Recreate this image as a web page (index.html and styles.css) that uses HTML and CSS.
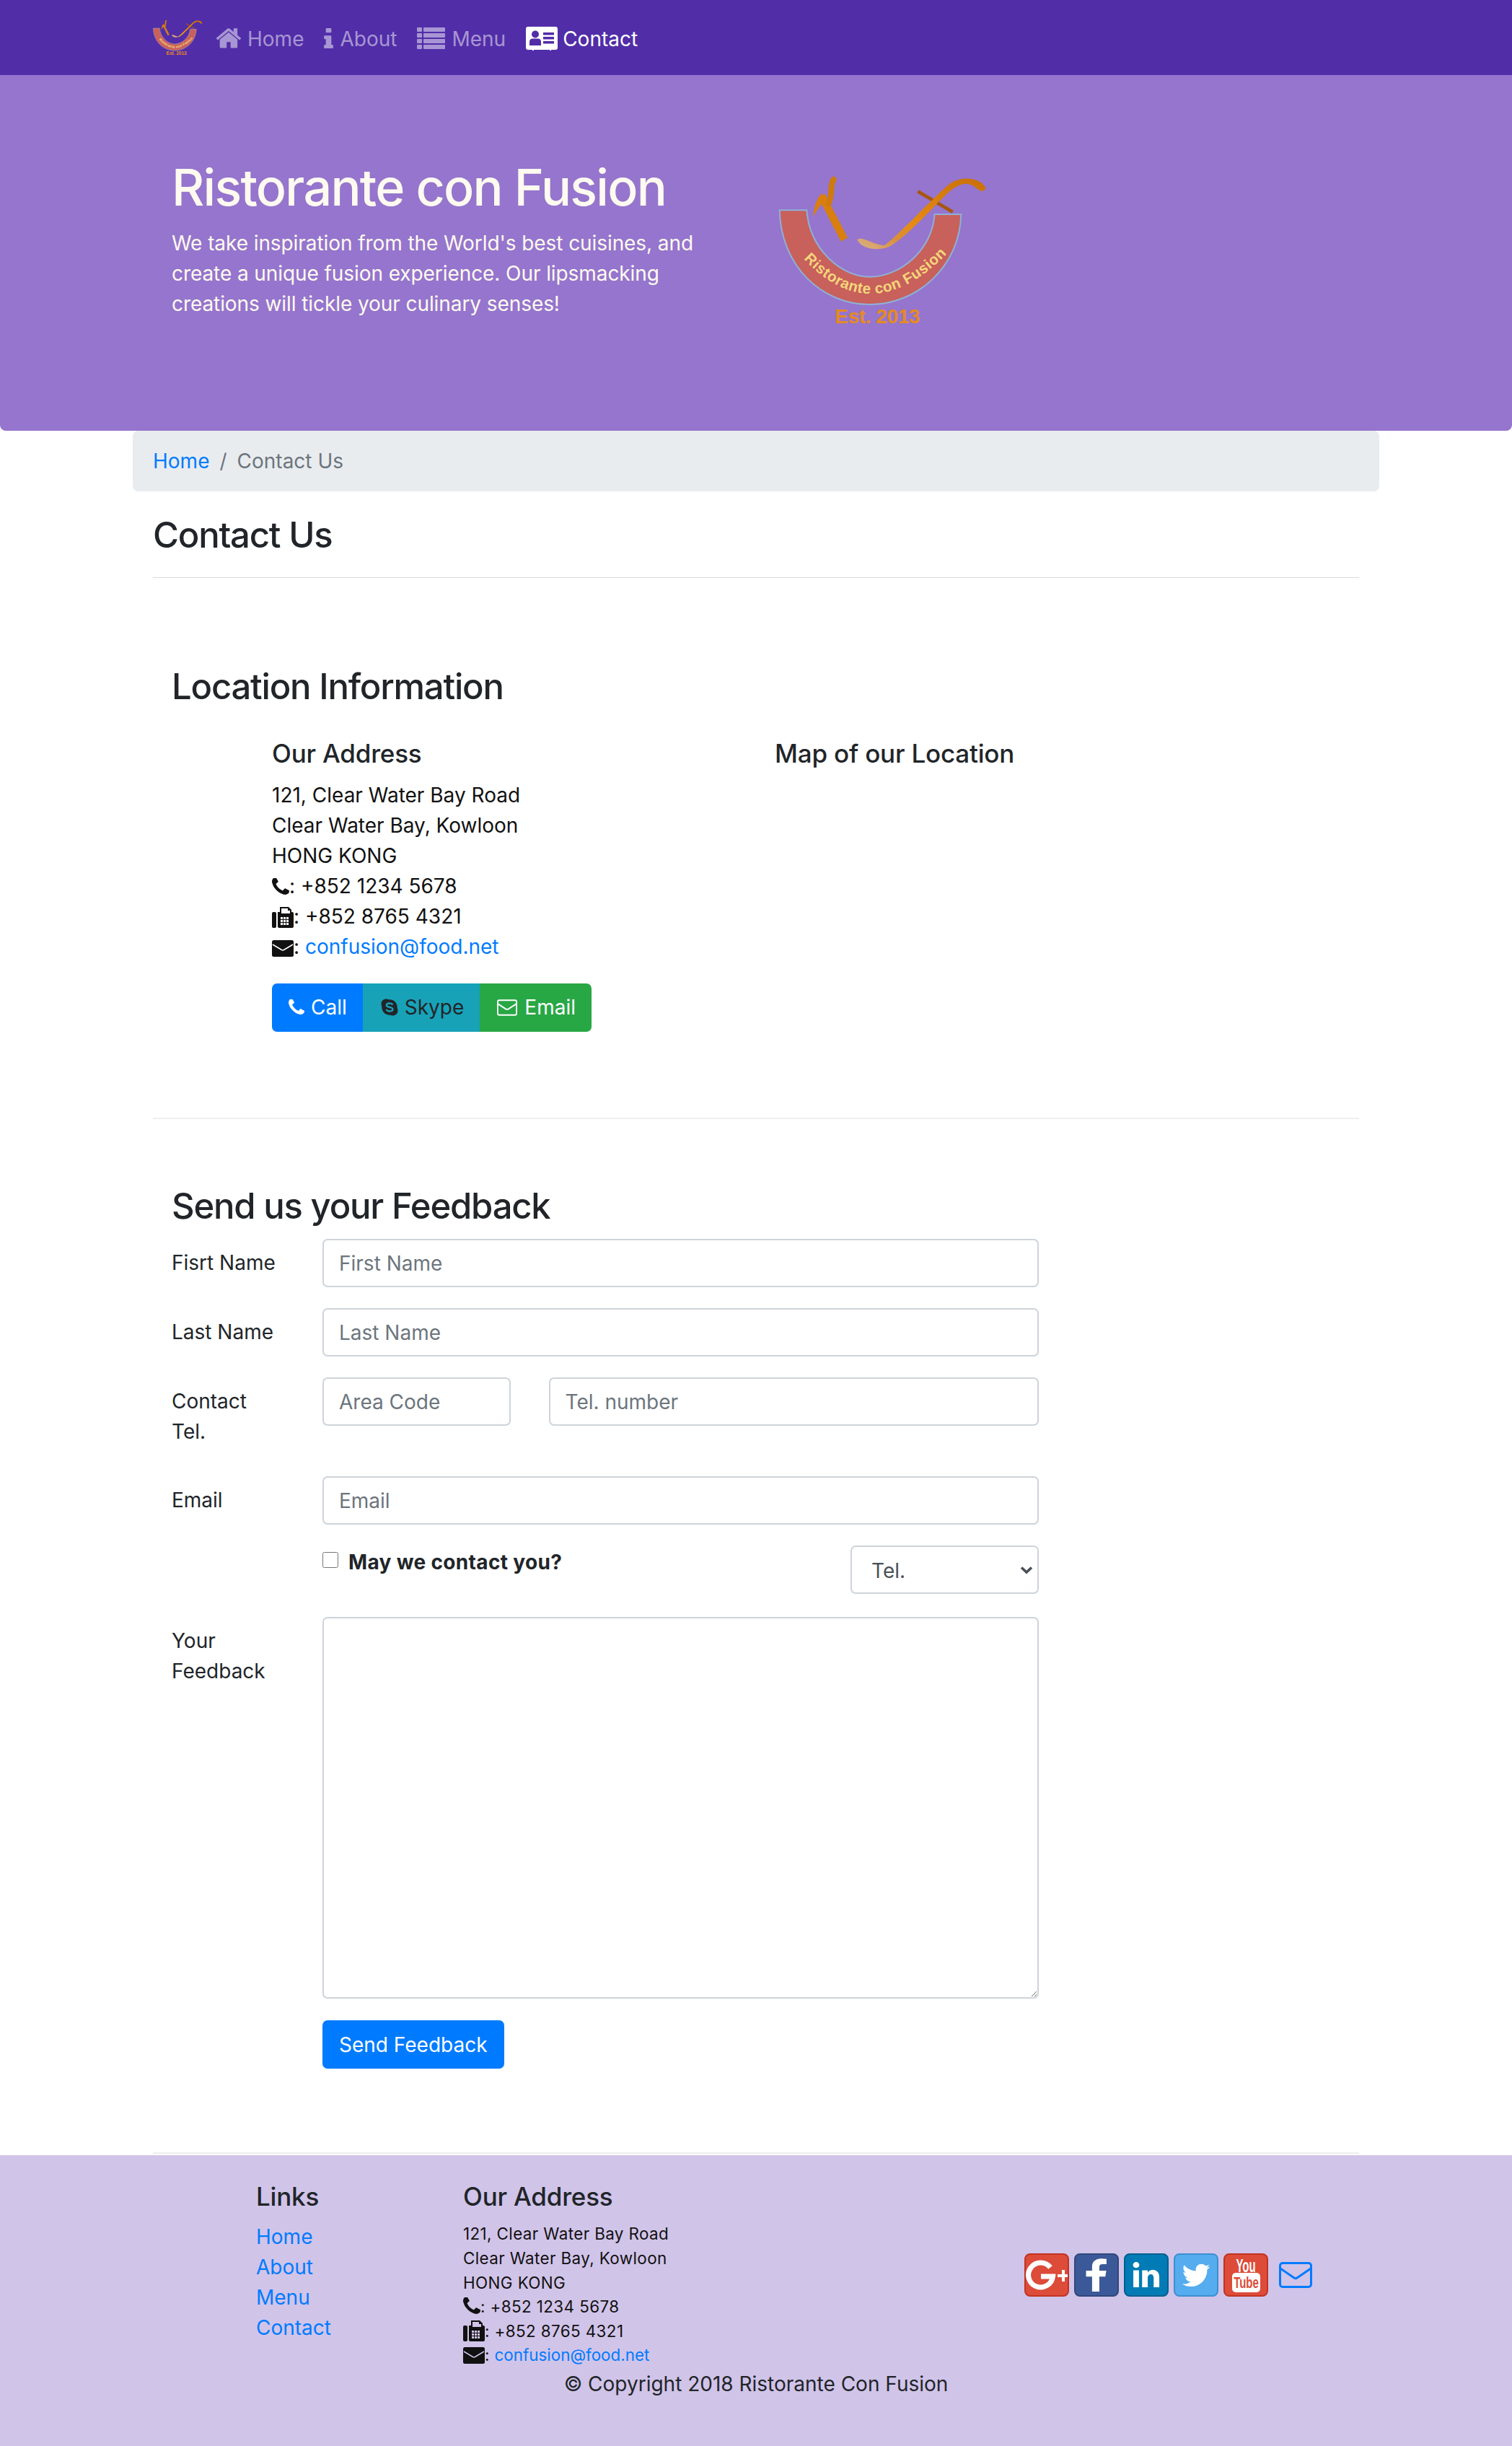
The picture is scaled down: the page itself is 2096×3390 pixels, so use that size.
FILE: index.html
```html
<!DOCTYPE html>
<html lang="en">
<head>
<meta charset="utf-8">
<title>Ristorante con Fusion: Contact</title>
<link rel="stylesheet" href="styles.css">
</head>
<body>
<svg class="defs" width="0" height="0" aria-hidden="true">
  <defs>
    <linearGradient id="spoon" x1="0" y1="1" x2="1" y2="0">
      <stop offset="0" stop-color="#d9b48c"/><stop offset="0.22" stop-color="#d98f3a"/><stop offset="0.4" stop-color="#e58a12"/><stop offset="1" stop-color="#c96f08"/>
    </linearGradient>
    <symbol id="logo" viewBox="120 90 870 636">
      <path d="M125 238H238C250 400 380 515 500 515C630 515 760 400 770 255H880C875 470 700 630 500 630C300 630 130 470 125 238Z" fill="#c8605c" stroke="#8fb0d6" stroke-width="6"/>
      <path d="M265 265C268 225 280 185 302 168L318 196C298 210 280 240 265 265Z" fill="#d97f10"/>
      <path d="M300 178L394 360" fill="none" stroke="#d97f10" stroke-width="32"/>
      <path d="M328 212C348 170 332 135 350 110" fill="none" stroke="#cf7a0e" stroke-width="24" stroke-linecap="round"/>
      <path d="M700 160L845 245" stroke="#a8570f" stroke-width="14"/>
      <path d="M448 360C470 345 500 375 560 385C620 340 750 200 830 130C880 95 950 100 980 140C985 160 965 165 945 148C910 115 870 125 820 170C740 250 660 340 590 385C540 412 465 400 448 360Z" fill="url(#spoon)"/>
      <path id="logo-arc" d="M225 440Q500 735 810 430" fill="none"/>
      <text class="logo-arc-text"><textPath href="#logo-arc" startOffset="0" textLength="690">Ristorante con Fusion</textPath></text>
      <text class="logo-est" x="355" y="708" textLength="355">Est. 2013</text>
    </symbol>
  </defs>
</svg>

<nav class="navbar">
  <div class="nav-inner">
    <svg class="nav-logo"><use href="#logo"/></svg>
    <a class="nav-link" href="#"><svg class="ic-home" viewBox="100 200 1600 1400"><path fill="currentColor" d="M1472 992v480q0 26-19 45t-45 19h-384v-384h-256v384h-384q-26 0-45-19t-19-45v-480q0-1 .5-3t.5-3l575-474 575 474q1 2 1 6zm223-69l-62 74q-8 9-21 11h-3q-13 0-21-7l-692-577-692 577q-12 8-24 7-13-2-21-11l-62-74q-8-10-7-23.5t11-21.5l719-599q32-26 76-26t76 26l244 204v-195q0-14 9-23t23-9h192q14 0 23 9t9 23v408l219 182q10 8 11 21.5t-7 23.5z"/></svg>Home</a>
    <a class="nav-link" href="#"><svg class="ic-info" viewBox="570 128 650 1408"><path fill="currentColor" d="M1216 1344v128q0 26-19 45t-45 19h-512q-26 0-45-19t-19-45v-128q0-26 19-45t45-19h64v-384h-64q-26 0-45-19t-19-45v-128q0-26 19-45t45-19h384q26 0 45 19t19 45v576h64q26 0 45 19t19 45zm-128-1152v192q0 26-19 45t-45 19h-256q-26 0-45-19t-19-45v-192q0-26 19-45t45-19h256q26 0 45 19t19 45z"/></svg>About</a>
    <a class="nav-link" href="#"><svg class="ic-list" viewBox="0 0 39 30"><g fill="currentColor"><rect y="0" width="7" height="6" rx="1"/><rect x="9" y="0" width="30" height="6" rx="1"/><rect y="8" width="7" height="6" rx="1"/><rect x="9" y="8" width="30" height="6" rx="1"/><rect y="16" width="7" height="6" rx="1"/><rect x="9" y="16" width="30" height="6" rx="1"/><rect y="24" width="7" height="6" rx="1"/><rect x="9" y="24" width="30" height="6" rx="1"/></g></svg>Menu</a>
    <a class="nav-link active" href="#"><svg class="ic-card" viewBox="0 0 44 33"><path fill="#fff" d="M3 0H41Q44 0 44 3V29Q44 32 41 32H35V33H33V32H11V33H9V32H3Q0 32 0 29V3Q0 0 3 0Z"/><g fill="#512da8"><circle cx="13" cy="10.5" r="5"/><path d="M5 26V21Q5 16.5 9.500 16.500H16.500Q21 16.500 21 21V26Z"/><rect x="24" y="8" width="15" height="3.500"/><rect x="24" y="14" width="15" height="3.500"/><rect x="24" y="20" width="15" height="3.500"/></g></svg>Contact</a>
  </div>
</nav>

<header class="jumbotron">
  <div class="container">
    <div class="jumbo-row">
      <div class="jumbo-text">
        <h1>Ristorante con Fusion</h1>
        <p>We take inspiration from the World's best cuisines, and create a unique fusion experience. Our lipsmacking creations will tickle your culinary senses!</p>
      </div>
      <svg class="jumbo-logo"><use href="#logo"/></svg>
    </div>
  </div>
</header>

<main class="container">
  <ol class="breadcrumb">
    <li><a href="#">Home</a></li>
    <li class="crumb-sep">/</li>
    <li class="crumb-active">Contact Us</li>
  </ol>
  <h3 class="page-title">Contact Us</h3>
  <hr class="title-rule">

  <section class="row-content">
    <h3 class="section-title">Location Information</h3>
    <div class="location">
      <div class="loc-address">
        <h5>Our Address</h5>
        <address class="addr">
          121, Clear Water Bay Road<br>
          Clear Water Bay, Kowloon<br>
          HONG KONG<br>
          <svg class="ic-phone" viewBox="192 192 1408 1408"><path fill="currentColor" d="M1600 1240q0 27-10 70.5t-21 68.5q-21 50-122 106-94 51-186 51-27 0-53-3.5t-57.5-12.5-47-14.5-55.5-20.5-49-18q-98-35-175-83-127-79-264-216t-216-264q-48-77-83-175-3-9-18-49t-20.5-55.5-14.5-47-12.5-57.5-3.5-53q0-92 51-186 56-101 106-122 25-11 68.5-21t70.5-10q14 0 21 3 18 6 53 76 11 19 30 54t35 63.5 31 53.5q3 4 17.5 25t21.5 35.5 7 28.5q0 20-28.5 50t-62 55-62 53-28.5 46q0 9 5 22.5t8.5 20.5 14 24 11.5 19q76 137 174 235t235 174q2 1 19 11.5t24 14 20.500 8.500 22.500 5q18 0 46-28.500t53-62 55-62 50-28.500q14 0 28.500 7t35.500 21.500 25 17.500q25 15 53.500 31t63.500 35 54 30q70 35 76 53 3 7 3 21z"/></svg>: +852 1234 5678<br>
          <svg class="ic-fax" viewBox="0 0 30 30"><rect y="8" width="6" height="22" rx="2" fill="currentColor"/><path fill="currentColor" d="M8 8H11V1H23L27 5V8H28Q30 8 30 10V28Q30 30 28 30H10Q8 30 8 28Z"/><path fill="#fff" d="M13 3H22V6H25V10H13Z"/><g fill="#fff"><rect x="12" y="15" width="3" height="3"/><rect x="16" y="15" width="3" height="3"/><rect x="20" y="15" width="3" height="3"/><rect x="12" y="19" width="3" height="3"/><rect x="16" y="19" width="3" height="3"/><rect x="20" y="19" width="3" height="3"/><rect x="12" y="23" width="3" height="3"/><rect x="16" y="23" width="3" height="3"/><rect x="20" y="23" width="3" height="3"/></g></svg>: +852 8765 4321<br>
          <svg class="ic-env" viewBox="0 0 30 23"><rect width="30" height="23" rx="2.500" fill="currentColor"/><path d="M1 6L13.500 13.500Q15 14.300 16.500 13.500L29 6" fill="none" stroke="#fff" stroke-width="1.500"/></svg>: <a href="#">confusion@food.net</a>
        </address>
        <div class="btn-group">
          <a class="btn btn-primary" href="#"><svg class="btn-ic" viewBox="192 192 1408 1408"><path fill="currentColor" d="M1600 1240q0 27-10 70.5t-21 68.5q-21 50-122 106-94 51-186 51-27 0-53-3.5t-57.5-12.5-47-14.5-55.5-20.5-49-18q-98-35-175-83-127-79-264-216t-216-264q-48-77-83-175-3-9-18-49t-20.5-55.5-14.5-47-12.5-57.5-3.5-53q0-92 51-186 56-101 106-122 25-11 68.5-21t70.5-10q14 0 21 3 18 6 53 76 11 19 30 54t35 63.5 31 53.5q3 4 17.5 25t21.5 35.5 7 28.5q0 20-28.5 50t-62 55-62 53-28.5 46q0 9 5 22.5t8.5 20.5 14 24 11.5 19q76 137 174 235t235 174q2 1 19 11.5t24 14 20.500 8.500 22.500 5q18 0 46-28.500t53-62 55-62 50-28.500q14 0 28.500 7t35.500 21.500 25 17.500q25 15 53.500 31t63.500 35 54 30q70 35 76 53 3 7 3 21z"/></svg>Call</a>
          <a class="btn btn-info" href="#"><svg class="btn-ic" viewBox="0 0 24 24"><path fill="currentColor" d="M7 0.500C9 0.500 10.500 1.300 12 1.300C18 1.300 22.700 6 22.700 12C22.700 13.500 23.500 15 23.500 17C23.500 20.500 20.500 23.500 17 23.500C15 23.500 13.500 22.700 12 22.700C6 22.700 1.300 18 1.300 12C1.300 10.500 0.500 9 0.500 7C0.500 3.500 3.500 0.500 7 0.500Z"/><path d="M16.500 8.500C15.500 7 14 6.500 12 6.500C9.500 6.500 7.800 7.600 7.800 9.200C7.800 12.800 16.500 11 16.500 14.800C16.500 16.500 14.500 17.500 12 17.500C9.800 17.500 8.300 16.700 7.400 15" fill="none" stroke="#17a2b8" stroke-width="2.300"/></svg>Skype</a>
          <a class="btn btn-success" href="#"><svg class="btn-ic-env" viewBox="0 0 30 24"><rect x="1" y="1" width="28" height="22" rx="2.500" fill="none" stroke="currentColor" stroke-width="2"/><path d="M1.500 6.500L13 14Q15 15.200 17 14L28.500 6.500" fill="none" stroke="currentColor" stroke-width="2"/></svg>Email</a>
        </div>
      </div>
      <div class="loc-map">
        <h5>Map of our Location</h5>
      </div>
    </div>
  </section>

  <section class="row-content row-feedback">
    <h3 class="section-title feedback-title">Send us your Feedback</h3>
    <form class="feedback-form">
      <div class="form-row">
        <label class="form-label">Fisrt Name</label>
        <div class="form-field"><input class="form-control" type="text" placeholder="First Name"></div>
      </div>
      <div class="form-row">
        <label class="form-label">Last Name</label>
        <div class="form-field"><input class="form-control" type="text" placeholder="Last Name"></div>
      </div>
      <div class="form-row">
        <label class="form-label">Contact Tel.</label>
        <div class="form-field form-split">
          <input class="form-control area-code" type="tel" placeholder="Area Code">
          <input class="form-control" type="tel" placeholder="Tel. number">
        </div>
      </div>
      <div class="form-row">
        <label class="form-label">Email</label>
        <div class="form-field"><input class="form-control" type="email" placeholder="Email"></div>
      </div>
      <div class="form-row form-check-row">
        <div class="form-spacer"></div>
        <div class="form-field form-contact">
          <label class="check-label"><input class="check" type="checkbox"><strong>May we contact you?</strong></label>
          <select class="form-control contact-select"><option>Tel.</option><option>Email</option></select>
        </div>
      </div>
      <div class="form-row form-area-row">
        <label class="form-label">Your Feedback</label>
        <div class="form-field"><textarea class="form-control feedback-area" rows="12"></textarea></div>
      </div>
      <div class="form-row form-last">
        <div class="form-spacer"></div>
        <div class="form-field"><button class="btn btn-primary send-btn" type="button">Send Feedback</button></div>
      </div>
    </form>
  </section>
</main>

<footer class="footer">
  <div class="container">
    <div class="footer-row">
      <div class="footer-links">
        <h5>Links</h5>
        <ul>
          <li><a href="#">Home</a></li>
          <li><a href="#">About</a></li>
          <li><a href="#">Menu</a></li>
          <li><a href="#">Contact</a></li>
        </ul>
      </div>
      <div class="footer-address">
        <h5>Our Address</h5>
        <address class="addr addr-small">
          121, Clear Water Bay Road<br>
          Clear Water Bay, Kowloon<br>
          HONG KONG<br>
          <svg class="ic-phone" viewBox="192 192 1408 1408"><path fill="currentColor" d="M1600 1240q0 27-10 70.5t-21 68.5q-21 50-122 106-94 51-186 51-27 0-53-3.5t-57.5-12.5-47-14.5-55.5-20.5-49-18q-98-35-175-83-127-79-264-216t-216-264q-48-77-83-175-3-9-18-49t-20.5-55.5-14.5-47-12.5-57.5-3.5-53q0-92 51-186 56-101 106-122 25-11 68.5-21t70.5-10q14 0 21 3 18 6 53 76 11 19 30 54t35 63.5 31 53.5q3 4 17.5 25t21.5 35.5 7 28.5q0 20-28.5 50t-62 55-62 53-28.5 46q0 9 5 22.5t8.5 20.5 14 24 11.5 19q76 137 174 235t235 174q2 1 19 11.5t24 14 20.500 8.500 22.500 5q18 0 46-28.500t53-62 55-62 50-28.500q14 0 28.500 7t35.500 21.500 25 17.500q25 15 53.500 31t63.500 35 54 30q70 35 76 53 3 7 3 21z"/></svg>: +852 1234 5678<br>
          <svg class="ic-fax" viewBox="0 0 30 30"><rect y="8" width="6" height="22" rx="2" fill="currentColor"/><path fill="currentColor" d="M8 8H11V1H23L27 5V8H28Q30 8 30 10V28Q30 30 28 30H10Q8 30 8 28Z"/><path fill="#d1c4e9" d="M13 3H22V6H25V10H13Z"/><g fill="#d1c4e9"><rect x="12" y="15" width="3" height="3"/><rect x="16" y="15" width="3" height="3"/><rect x="20" y="15" width="3" height="3"/><rect x="12" y="19" width="3" height="3"/><rect x="16" y="19" width="3" height="3"/><rect x="20" y="19" width="3" height="3"/><rect x="12" y="23" width="3" height="3"/><rect x="16" y="23" width="3" height="3"/><rect x="20" y="23" width="3" height="3"/></g></svg>: +852 8765 4321<br>
          <svg class="ic-env" viewBox="0 0 30 23"><rect width="30" height="23" rx="2.500" fill="currentColor"/><path d="M1 6L13.500 13.500Q15 14.300 16.500 13.500L29 6" fill="none" stroke="#d1c4e9" stroke-width="1.500"/></svg>: <a href="#">confusion@food.net</a>
        </address>
      </div>
      <div class="footer-social">
        <a class="social s-google" href="#"><svg viewBox="2 2 58 56"><path d="M36 19.500A17 17 0 1 0 39.500 32H23" fill="none" stroke="#fff" stroke-width="7"/><path d="M46 29H52V23H56V29H60V33H56V39H52V33H46Z" fill="#fff"/></svg></a>
        <a class="social s-facebook" href="#"><svg viewBox="0 0 1792 1792"><path fill="#fff" d="M1343 12v264h-157q-86 0-116 36t-30 108v189h293l-39 296h-254v759h-306v-759h-255v-296h255v-218q0-186 104-288.500t277-102.500q147 0 228 12z" transform="translate(-70 170) scale(1.05 .88)"/></svg></a>
        <a class="social s-linkedin" href="#"><svg viewBox="0 0 1792 1792"><path fill="#fff" d="M477 625v991h-330v-991h330zm21-306q1 73-50.500 122t-135.500 49h-2q-82 0-132-49t-50-122q0-74 51.500-122.500t134.500-48.500 133 48.500 51 122.500zm1166 729v568h-329v-530q0-105-40.500-164.500t-126.500-59.500q-63 0-105.500 34.500t-63.500 85.500q-11 30-11 81v553h-329q2-399 2-647t-1-296l-1-48h329v144h-2q20-32 41-56t56.500-52 87-43.500 114.500-15.500q171 0 275 113.500t104 332.500z" transform="translate(210 210) scale(.76)"/></svg></a>
        <a class="social s-twitter" href="#"><svg viewBox="0 0 1792 1792"><path fill="#fff" d="M1684 408q-67 98-162 167 1 14 1 42 0 130-38 259.500t-115.500 248.500-184.500 210.500-258 146-323 54.500q-271 0-496-145 35 4 76 4 225 0 401-138-105-2-188-64.500t-114-159.500q33 5 61 5 43 0 85-11-112-23-185.500-111.500t-73.500-205.500v-4q68 38 146 41-66-44-105-115t-39-154q0-88 44-163 121 149 294.500 238.500t371.500 99.500q-8-38-8-74 0-134 94.500-228.500t228.500-94.500q140 0 236 102 109-21 205-78-37 115-142 178 92-10 184-50z" transform="translate(200 210) scale(.78)"/></svg></a>
        <a class="social s-youtube" href="#"><svg viewBox="2 2 58 56"><text class="yt-you" text-anchor="middle" transform="translate(31 26) scale(1 1.700)">You</text><rect x="12" y="27" width="39" height="27" rx="5" fill="#fff"/><text class="yt-tube" text-anchor="middle" transform="translate(31.500 48) scale(1 1.500)">Tube</text></svg></a>
        <a class="social-mail" href="#"><svg viewBox="0 0 46 36"><rect x="1.500" y="1.500" width="43" height="33" rx="3.500" fill="none" stroke="currentColor" stroke-width="3"/><path d="M2 9L21 22Q23 23.400 25 22L44 9" fill="none" stroke="currentColor" stroke-width="3"/></svg></a>
      </div>
    </div>
    <p class="copyright">© Copyright 2018 Ristorante Con Fusion</p>
  </div>
</footer>
</body>
</html>
```

FILE: styles.css
```css
* { box-sizing: border-box; }
html, body { margin: 0; padding: 0; }
body {
  font-family: Inter, "Liberation Sans", sans-serif;
  font-size: 28px;
  line-height: 42px;
  color: #212529;
  background: #fff;
}
.defs { position: absolute; }
a { color: #007bff; text-decoration: none; }
h1, h3, h5, p, ul, ol, address { margin: 0; padding: 0; font-style: normal; }
h1, h3, h5 { font-weight: 500; line-height: 1.2; }
h3 { font-size: 49px; letter-spacing: -1.200px; }
h5 { font-size: 35px; line-height: 42px; margin-bottom: 14px; letter-spacing: -0.200px; }
.container { width: 1672px; margin: 0 auto; }

/* navbar */
.navbar { background: #512da8; height: 104px; }
.nav-inner { width: 1672px; margin: 0 auto; display: flex; align-items: center; height: 104px; padding-top: 4px; }
.nav-logo { width: 69px; height: 51px; margin-right: 5px; position: relative; top: -2px; }
.nav-link { display: flex; align-items: center; padding: 0 14px; color: rgba(255,255,255,.5); height: 42px; }
.nav-link.active { color: #fff; }
.nav-link svg { margin-right: 9px; flex: none; position: relative; top: -1px; }
.ic-home { width: 34px; height: 30px; }
.ic-info { width: 13px; height: 30px; }
.ic-list { width: 39px; height: 30px; }
.ic-card { width: 44px; height: 33px; margin-right: 7px !important; }

/* jumbotron */
.jumbotron { background: #9575cd; color: #fffaf0; height: 493px; padding-top: 114px; border-radius: 0 0 8px 8px; }
.jumbo-row { display: flex; padding-left: 26px; }
.jumbo-text { width: 836px; padding-right: 52px; flex: none; }
.jumbotron h1 { font-size: 70px; line-height: 84px; font-weight: 500; margin-bottom: 14px; letter-spacing: -1.750px; }
.jumbotron p { letter-spacing: -.08px; }
.jumbo-logo { width: 290px; height: 212px; margin-left: 5px; margin-top: 24px; }

/* breadcrumb */
.breadcrumb { list-style: none; display: flex; background: #e9ecef; border-radius: 7px; margin: 0 -28px; padding: 21px 28px; width: 1728px; }
.crumb-sep { color: #6c757d; padding: 0 14px; }
.crumb-active { color: #6c757d; }

.page-title { margin-top: 32px; margin-bottom: 0; }
.title-rule { border: 0; height: 1px; background: rgba(0,0,0,.14); margin: 28px 0 1px; }

/* sections */
.row-content { padding: 121px 26px 119px; border-bottom: 2px solid #eee; }
.row-feedback { padding-top: 92px; padding-bottom: 116px; }
.section-title { margin-bottom: 41px; }
.feedback-title { margin-bottom: 16px; }
.location { display: flex; padding-left: 139px; }
.loc-address { width: 697px; flex: none; }
.loc-address h5 { margin-bottom: 16px; }
.addr { line-height: 42px; color: #111; }
.addr a { color: #007bff; }
.ic-phone { width: 24px; height: 24px; vertical-align: -3px; }
.ic-fax { width: 30px; height: 30px; vertical-align: -6px; }
.ic-env { width: 30px; height: 23px; vertical-align: -4px; }
.addr-small { font-size: 22.400px; line-height: 33.600px; letter-spacing: .4px; }
.addr-small a { letter-spacing: 0; }

/* buttons */
.btn-group { display: inline-flex; margin-top: 30px; border-radius: 7px; overflow: hidden; }
.btn { display: inline-flex; align-items: center; height: 67px; padding: 0 22px 0 23px; border: 0; font: inherit; cursor: pointer; white-space: nowrap; }
.btn-primary { background: #007bff; color: #fff; }
.btn-info { background: #17a2b8; color: #212529; padding-left: 25px; }
.btn-success { background: #28a745; color: #fff; padding-left: 24px; }
.btn-ic { width: 24px; height: 24px; margin-right: 9px; }
.btn-primary .btn-ic { width: 22px; height: 22px; }
.btn-ic-env { width: 28px; height: 23px; margin-right: 10px; }

/* form */
.feedback-form { width: 1202px; }
.form-row { display: flex; gap: 52.500px; margin-bottom: 29px; }
.form-label { width: 156.500px; flex: none; padding: 12px 0; }
.form-spacer { width: 156.500px; flex: none; }
.form-field { flex: 1; min-width: 0; }
.form-control { display: block; width: 100%; height: 67px; padding: 10px 21px; border: 2px solid #ced4da; border-radius: 7px; background: #fff; color: #495057; font: inherit; }
.form-control::placeholder { color: #6c757d; opacity: 1; }
.form-split { display: flex; gap: 52.500px; }
.area-code { width: 261px; flex: none; }
.form-split .form-control:last-child { flex: 1; min-width: 0; }
.form-contact { display: flex; justify-content: space-between; align-items: flex-start; }
.check-label { display: flex; align-items: flex-start; padding-top: 2px; }
.check-label strong { letter-spacing: .34px; }
.check { width: 22px; height: 22px; margin: 7px 14px 0 0; flex: none; }
.contact-select {
  width: 261px;
  padding-left: 27px;
  padding-top: 12px;
  appearance: none;
  background-image: url("data:image/svg+xml,%3Csvg xmlns='http://www.w3.org/2000/svg' viewBox='0 0 18 12'%3E%3Cpath d='M2 2.500L9 9L16 2.500' fill='none' stroke='%23495057' stroke-width='3.600'/%3E%3C/svg%3E");
  background-repeat: no-repeat;
  background-position: right 6px center;
  background-size: 18px 12px;
}
.feedback-area { height: 529px; resize: vertical; }
.form-check-row { margin-bottom: 32px; }
.form-area-row { margin-bottom: 30px; }
.form-last { margin-bottom: 0; }
.send-btn { border-radius: 7px; padding: 0 23px; }

/* footer */
.footer { background: #d1c4e9; height: 405px; padding-top: 36px; margin-top: 2px; }
.footer-row { display: flex; padding-left: 143px; height: 260px; }
.footer-links { width: 287px; flex: none; }
.footer-links ul { list-style: none; }
.footer-address { width: 778px; flex: none; }
.footer-social { display: flex; align-items: center; gap: 7px; }
.social { width: 62px; height: 60px; border-radius: 8px; border: 2px solid transparent; display: block; overflow: hidden; }
.social svg { display: block; width: 100%; height: 100%; }
.s-google { background: #dd4b39; border-color: #c23321; }
.s-facebook { background: #3b5998; border-color: #30487b; }
.s-linkedin { background: #007bb6; border-color: #005f8d; }
.s-twitter { background: #55acee; border-color: #3d8fcf; }
.s-youtube { background: #dd4b39; border-color: #c23321; }
.social-mail { display: block; width: 46px; height: 36px; margin-left: 8px; color: #007bff; }
.social-mail svg { display: block; width: 46px; height: 36px; }
.copyright { text-align: center; }

/* svg text */
.logo-arc-text { font-family: "Liberation Sans", sans-serif; font-weight: 700; font-size: 62px; fill: #f7d67a; }
.logo-est { font-family: "Liberation Sans", sans-serif; font-weight: 700; font-size: 84px; fill: #e58a22; }
.yt-you { font-family: "Liberation Sans", sans-serif; font-weight: 700; font-size: 15px; fill: #fff; }
.yt-tube { font-family: "Liberation Sans", sans-serif; font-weight: 700; font-size: 15px; fill: #dd4b39; }
```
